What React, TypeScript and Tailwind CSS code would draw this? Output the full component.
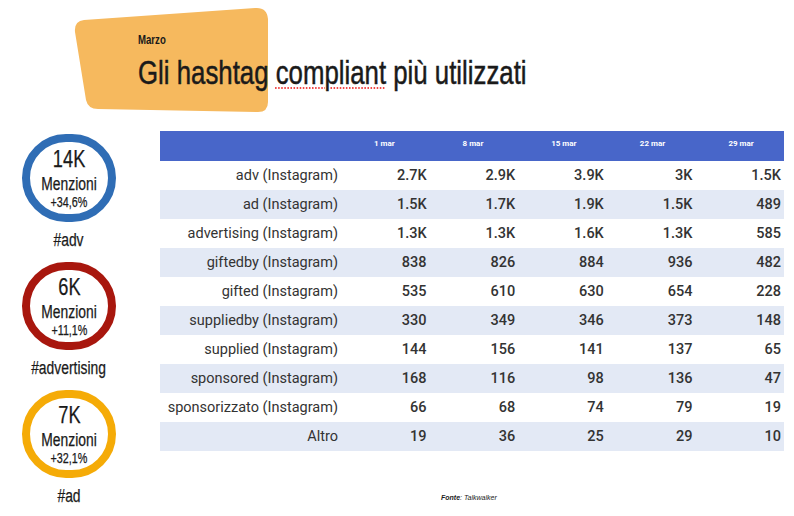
import React from "react";

const sans = { fontFamily: '"Liberation Sans", Arial, sans-serif' };

// Reference uses a tall condensed face; Arial squeezed horizontally gets close.
function Narrow({ children, className = "" }: { children: React.ReactNode; className?: string }) {
  return (
    <span className={`inline-block whitespace-nowrap scale-x-[0.77] ${className}`} style={sans}>
      {children}
    </span>
  );
}

const badges = [
  { value: "14K", delta: "+34,6%", tag: "#adv", ring: "border-[#2f6db5]" },
  { value: "6K", delta: "+11,1%", tag: "#advertising", ring: "border-[#a8170e]" },
  { value: "7K", delta: "+32,1%", tag: "#ad", ring: "border-[#f5ab07]" },
];

const weeks = ["1 mar", "8 mar", "15 mar", "22 mar", "29 mar"];

const rows: [string, string[]][] = [
  ["adv (Instagram)", ["2.7K", "2.9K", "3.9K", "3K", "1.5K"]],
  ["ad (Instagram)", ["1.5K", "1.7K", "1.9K", "1.5K", "489"]],
  ["advertising (Instagram)", ["1.3K", "1.3K", "1.6K", "1.3K", "585"]],
  ["giftedby (Instagram)", ["838", "826", "884", "936", "482"]],
  ["gifted (Instagram)", ["535", "610", "630", "654", "228"]],
  ["suppliedby (Instagram)", ["330", "349", "346", "373", "148"]],
  ["supplied (Instagram)", ["144", "156", "141", "137", "65"]],
  ["sponsored (Instagram)", ["168", "116", "98", "136", "47"]],
  ["sponsorizzato (Instagram)", ["66", "68", "74", "79", "19"]],
  ["Altro", ["19", "36", "25", "29", "10"]],
];

export default function App() {
  return (
    <div className="relative h-[516px] w-[794px] overflow-hidden bg-white">
      <svg className="absolute left-0 top-0" width="300" height="120" viewBox="0 0 300 120">
        <path
          d="M84 20 Q74 21 75 32 L86 100 Q88 109 98 109 L258 112 Q268 112 268 102 L268 19 Q267 7 255 8 Z"
          fill="#f6b95e"
        />
      </svg>

      <div className="relative flex h-[131px] flex-col items-start pl-[138px] pt-[32px] text-[#1a1a1a]">
        <Narrow className="origin-left text-[12.5px] font-bold leading-[16px]">Marzo</Narrow>
        <h1 className="mt-[5px]">
          <Narrow className="origin-left text-[33.5px] leading-[40px] [-webkit-text-stroke:0.5px_#1a1a1a]">
            Gli hashtag{" "}
            <span className="underline decoration-[#f04848] decoration-dotted decoration-[1.5px] underline-offset-[3px]">compliant</span>{" "}
            più utilizzati
          </Narrow>
        </h1>
      </div>

      <div className="relative flex gap-[22px]">
        <div className="flex w-[138px] flex-col items-center pt-[3px] [-webkit-text-stroke:0.25px_#1a1a1a]">
          {badges.map((b) => (
            <div key={b.tag} className="mb-[11px] flex flex-col items-center text-[#1a1a1a]">
              <div className={`flex h-[88px] w-[94px] flex-col items-center justify-center rounded-full border-[8px] ${b.ring}`}>
                <Narrow className="text-[23.7px] leading-[24px]">{b.value}</Narrow>
                <Narrow className="mt-[3px] text-[18px] leading-[20px]">Menzioni</Narrow>
                <Narrow className="text-[14px] leading-[16px]">{b.delta}</Narrow>
              </div>
              <Narrow className="mt-[7px] text-[18px] leading-[22px]">{b.tag}</Narrow>
            </div>
          ))}
        </div>

        <div className="w-[624px]" style={{ fontFamily: "Roboto, sans-serif" }}>
          <div className="grid h-[30px] grid-cols-[181px_repeat(5,1fr)] items-center bg-[#4866c9] pb-[5px] text-[8px] font-bold text-white">
            <span />
            {weeks.map((w) => (
              <span key={w} className="pl-[33px]">{w}</span>
            ))}
          </div>
          {rows.map(([label, vals], i) => (
            <div
              key={label}
              className={`grid h-[29px] grid-cols-[181px_repeat(5,1fr)] items-center text-[14.5px] text-[#333] ${i % 2 ? "bg-[#e3e9f5]" : "bg-white"}`}
            >
              <span className="pr-[3px] text-right">{label}</span>
              {vals.map((v, j) => (
                <span key={j} className="pr-[3px] text-right font-medium">{v}</span>
              ))}
            </div>
          ))}
          <p className="mt-[42px] pl-[281px] text-[7px] italic text-[#222]" style={sans}>
            <span className="font-bold">Fonte</span>: Talkwalker
          </p>
        </div>
      </div>
    </div>
  );
}
